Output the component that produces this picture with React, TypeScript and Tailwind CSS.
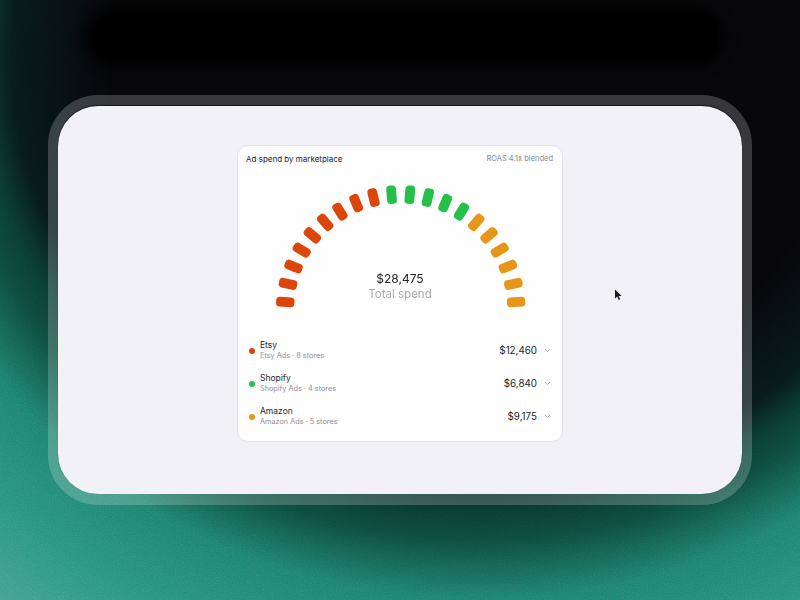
const segs = Array.from({ length: 20 }, (_, i) => {
  const deg = 4 + i * (172 / 19);
  const rad = (deg * Math.PI) / 180;
  const cx = 162.7 - 115.7 * Math.cos(rad);
  const cy = 144 - 115.7 * Math.sin(rad);
  const color = i < 9 ? "#dd460b" : i < 14 ? "#24c04a" : "#e6971a";
  return { deg, cx, cy, color };
});

const rows = [
  { dot: "bg-[#dc4210]", name: "Etsy", sub: "Etsy Ads · 8 stores", amount: "$12,460" },
  { dot: "bg-[#26c24a]", name: "Shopify", sub: "Shopify Ads · 4 stores", amount: "$6,840" },
  { dot: "bg-[#e6971a]", name: "Amazon", sub: "Amazon Ads · 5 stores", amount: "$9,175" },
];

export default function App() {
  return (
    <div className="relative flex h-[600px] w-[800px] items-center justify-center overflow-hidden bg-[#060608] font-['Inter',sans-serif]">
      <div className="absolute inset-0 bg-[radial-gradient(ellipse_806px_728px_at_480px_60px,#060608_0%,#060608_46%,#07191a_58%,#0a3a30_62%,#0e4a3e_66%,#1f7f6c_74%,#2b917e_85%,#45a08c_96%)]" />
      <div className="absolute left-[85px] top-[6px] h-[62px] w-[640px] rounded-[30px] bg-black blur-[6px]" />
      <svg className="absolute inset-0 h-full w-full opacity-[0.35] mix-blend-overlay">
        <filter id="grain">
          <feTurbulence type="fractalNoise" baseFrequency="0.9" numOctaves="2" />
          <feColorMatrix type="saturate" values="0" />
        </filter>
        <rect width="800" height="600" filter="url(#grain)" />
      </svg>

      <div className="relative h-[410px] w-[704px] rounded-[50px] border-x-[10px] border-y-[11px] border-white/20 bg-clip-padding">
        <div className="flex h-full w-full justify-center rounded-[40px] bg-[#f1f1f6] pt-[38.5px] shadow-[0_-1px_1px_rgba(0,0,0,0.6)]">
          <div className="flex h-[297.5px] w-[326px] flex-col rounded-[11px] border border-[#e2e2e8] bg-[#fefeff] blur-[0.3px]">
            <div className="flex items-center justify-between pl-[8px] pr-[9px] pt-[7px]">
              <span className="text-[8px] leading-[12px] text-[#26262b]">Ad spend by marketplace</span>
              <span className="text-[7.5px] leading-[12px] text-[#88888f]">ROAS 4.1x blended</span>
            </div>
            <div className="relative mt-[1px] h-[174px]">
              <svg width="326" height="174" viewBox="0 0 326 174" className="block">
                {segs.map((s, i) => (
                  <rect
                    key={i}
                    x={s.cx - 9.2}
                    y={s.cy - 4.9}
                    width="18.4"
                    height="9.8"
                    rx="3.8"
                    fill={s.color}
                    transform={`rotate(${s.deg} ${s.cx} ${s.cy})`}
                  />
                ))}
              </svg>
              <div className="absolute left-0 right-0 top-[105px] flex flex-col items-center">
                <span className="text-[12px] leading-[16px] text-[#26262b]">$28,475</span>
                <span className="text-[11.5px] leading-[15px] text-[#a9a9b0]">Total spend</span>
              </div>
            </div>
            <div className="flex flex-col gap-[11px] pl-[11px] pr-[11px]">
              {rows.map((r) => (
                <div key={r.name} className="flex h-[22px] items-center">
                  <span className={`h-[6px] w-[6px] rounded-full ${r.dot}`} />
                  <div className="ml-[5px] flex flex-col">
                    <span className="text-[8.5px] leading-[11px] text-[#26262b]">{r.name}</span>
                    <span className="text-[7.3px] leading-[10px] text-[#8f8f96]">{r.sub}</span>
                  </div>
                  <span className="ml-auto text-[9.8px] leading-[14px] text-[#26262b]">{r.amount}</span>
                  <svg width="7" height="5" viewBox="0 0 7 5" className="ml-[7px]" fill="none" stroke="#a5a5ab" strokeWidth="0.9">
                    <path d="M1 1l2.5 2.5L6 1" />
                  </svg>
                </div>
              ))}
            </div>
          </div>
        </div>
      </div>

      <svg className="absolute left-[614px] top-[289px]" width="9" height="12" viewBox="0 0 9 12">
        <path d="M1 0.5v9l2.2-2 1.6 3.4 1.4-.7-1.6-3.2h3z" fill="#1a1a20" />
      </svg>
    </div>
  );
}
